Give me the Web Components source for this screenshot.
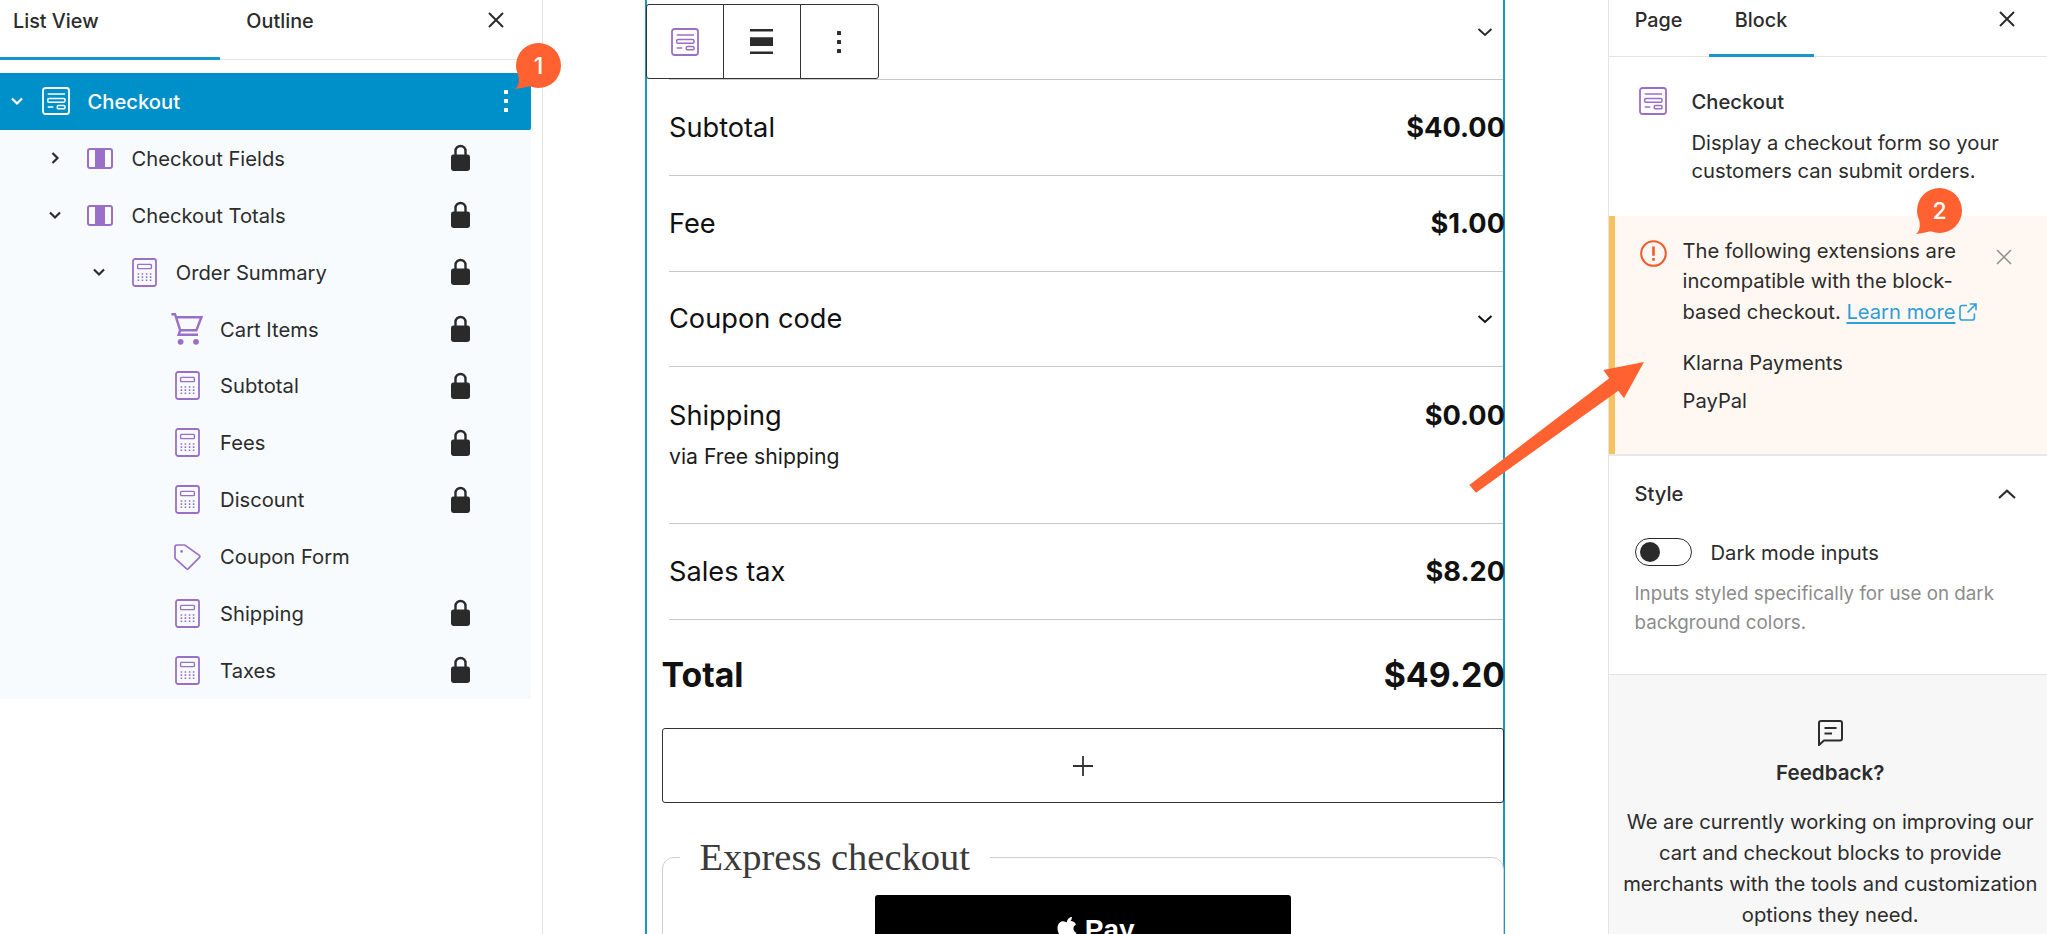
<!DOCTYPE html>
<html lang="en">
<head>
<meta charset="utf-8">
<title>Checkout block</title>
<style>
  html, body { margin: 0; height: 100%; background: #fff; overflow: hidden; }
  body { font-family: Inter, "Liberation Sans", sans-serif; color: #2c2c2c; }
</style>
</head>
<body>
<checkout-editor>
  <list-panel slot="left">
    <list-row level="0" icon="checkout" chevron="down" selected>Checkout</list-row>
    <list-row level="1" icon="columns" chevron="right" locked>Checkout Fields</list-row>
    <list-row level="1" icon="columns" chevron="down" locked>Checkout Totals</list-row>
    <list-row level="2" icon="calc" chevron="down" locked>Order Summary</list-row>
    <list-row level="3" icon="cart" locked>Cart Items</list-row>
    <list-row level="3" icon="calc" locked>Subtotal</list-row>
    <list-row level="3" icon="calc" locked>Fees</list-row>
    <list-row level="3" icon="calc" locked>Discount</list-row>
    <list-row level="3" icon="tag">Coupon Form</list-row>
    <list-row level="3" icon="calc" locked>Shipping</list-row>
    <list-row level="3" icon="calc" locked>Taxes</list-row>
  </list-panel>

  <checkout-canvas slot="center">
    <summary-row>Subtotal<span slot="price">$40.00</span></summary-row>
    <summary-row>Fee<span slot="price">$1.00</span></summary-row>
    <summary-row>Coupon code<block-icon slot="price" name="chevronDownBig" style="margin-right:12px"></block-icon></summary-row>
    <summary-row tall note="via Free shipping">Shipping<span slot="price">$0.00</span></summary-row>
    <summary-row>Sales tax<span slot="price">$8.20</span></summary-row>
    <summary-row total>Total<span slot="price">$49.20</span></summary-row>
  </checkout-canvas>

  <settings-panel slot="right"></settings-panel>

  <note-badge style="left:516px;top:43px">1</note-badge>
  <note-badge style="left:1917px;top:188px">2</note-badge>
  <callout-arrow></callout-arrow>
</checkout-editor>

<script>
  const PURPLE = '#9a6fc8';
  const ICONS = {
    checkout: { w: 28, h: 28, svg: `
      <rect x="1" y="1" width="26" height="26" rx="2.5" fill="none" stroke="currentColor" stroke-width="1.8"/>
      <path d="M5.7 7H23M5.7 20h5.6" stroke="currentColor" stroke-width="1.6" fill="none"/>
      <rect x="5.7" y="11.5" width="17.3" height="3.8" rx="1.2" fill="none" stroke="currentColor" stroke-width="1.5"/>
      <rect x="15.3" y="18.4" width="7.7" height="3.4" rx="1.1" fill="none" stroke="currentColor" stroke-width="1.5"/>` },
    columns: { w: 26, h: 21, svg: `
      <rect x="1" y="1" width="24" height="19" rx="2" fill="none" stroke="currentColor" stroke-width="2"/>
      <rect x="8" y="1" width="10" height="19" fill="currentColor"/>` },
    calc: { w: 25, h: 29, svg: `
      <rect x="1" y="1" width="23" height="27" rx="2.2" fill="none" stroke="currentColor" stroke-width="1.8"/>
      <rect x="5.6" y="6.4" width="13.8" height="4.2" rx=".8" fill="none" stroke="currentColor" stroke-width="1.4"/>
      <path d="M6.4 15.2v7.8M10.4 15.2v7.8M14.6 15.2v7.8M18.6 15.2v7.8" stroke="currentColor" stroke-width="1.6" stroke-dasharray="1.6 1.5" fill="none"/>` },
    cart: { w: 32, h: 32, svg: `
      <path d="M.4 1.2h3.6l5.2 16h16.2L30.4 4.2H5" fill="none" stroke="currentColor" stroke-width="2.4"/>
      <path d="M9.2 17.2 7.6 21.8h19.4" fill="none" stroke="currentColor" stroke-width="2.4"/>
      <circle cx="9.6" cy="28.8" r="2.9" fill="currentColor"/><circle cx="25" cy="28.8" r="2.9" fill="currentColor"/>` },
    tag: { w: 27, h: 26, svg: `
      <path d="M2.8 1h7.4c.6 0 1.1.2 1.5.6l13.600 9.800c.7.6.8 1.400.2 2L14.400 24.600c-.6.6-1.400.5-2 0L1.600 14.800c-.4-.4-.6-.8-.6-1.400V2.800C1 1.800 1.800 1 2.800 1Z" fill="none" stroke="currentColor" stroke-width="1.7"/>
      <circle cx="7.600" cy="7.400" r="1.300" fill="currentColor"/>` },
    lock: { w: 19, h: 27, svg: `
      <path d="M4.500 12V7a5 5 0 0 1 10 0v5" fill="none" stroke="currentColor" stroke-width="2.400"/>
      <rect y="10.500" width="19" height="16.500" rx="2.400" fill="currentColor"/>` },
    dots: { w: 6, h: 22, svg: `<rect y="0" x="1" width="4" height="4" rx=".6" fill="currentColor"/><rect y="9" x="1" width="4" height="4" rx=".6" fill="currentColor"/><rect y="18" x="1" width="4" height="4" rx=".6" fill="currentColor"/>` },
    chevronDown: { w: 14, h: 10, svg: `<path d="M2 2.500 7 7.500l5-5" fill="none" stroke="currentColor" stroke-width="2.200"/>` },
    chevronDownBig: { w: 16, h: 10, svg: `<path d="M1.500 2 8 8l6.500-6" fill="none" stroke="currentColor" stroke-width="2"/>` },
    chevronRight: { w: 10, h: 14, svg: `<path d="M2.500 2 7.500 7l-5 5" fill="none" stroke="currentColor" stroke-width="2.200"/>` },
    chevronUp: { w: 18, h: 10, svg: `<path d="M1 9 9 1.800 17 9" fill="none" stroke="currentColor" stroke-width="2.200"/>` },
    close: { w: 16, h: 16, svg: `<path d="m1 1 14 14M15 1 1 15" fill="none" stroke="currentColor" stroke-width="2"/>` },
    closeThin: { w: 16, h: 16, svg: `<path d="m1 1 14 14M15 1 1 15" fill="none" stroke="currentColor" stroke-width="1.500"/>` },
    alignNone: { w: 23, h: 25, svg: `<path d="M0 0h23v2.400H0zM0 8.300h23V17H0zM0 22.600h23V25H0z" fill="currentColor"/>` },
    alert: { w: 27, h: 27, svg: `
      <circle cx="13.500" cy="13.500" r="12.300" fill="none" stroke="currentColor" stroke-width="2"/>
      <path d="M12.200 6.500h2.600v9.300h-2.600zM12.200 18h2.600v2.700h-2.600z" fill="currentColor"/>` },
    external: { w: 18, h: 18, svg: `
      <path d="M8 2.500H3.200C2 2.500 1 3.500 1 4.700v10C1 16 2 17 3.200 17h10c1.200 0 2.200-1 2.200-2.300V10.500" fill="none" stroke="currentColor" stroke-width="1.600"/>
      <path d="M10.800 1H17v6.200M17 1 8.500 9.500" fill="none" stroke="currentColor" stroke-width="1.600"/>` },
    feedback: { w: 25, h: 26, svg: `
      <path d="M3 1h19c1.100 0 2 .9 2 2v15.500c0 1.100-.9 2-2 2H6L1 25V3c0-1.100.9-2 2-2Z" fill="none" stroke="currentColor" stroke-width="2"/>
      <path d="M6.500 8h12M6.500 13.500h7.500" fill="none" stroke="currentColor" stroke-width="2"/>` },
    plus: { w: 20, h: 20, svg: `<path d="M10 0v20M0 10h20" fill="none" stroke="currentColor" stroke-width="1.800"/>` },
    apple: { w: 20, h: 24, svg: `
      <path d="M14.800 1c.1 1.500-.4 2.900-1.300 4-.9 1-2.200 1.700-3.500 1.600-.2-1.400.4-2.900 1.300-3.900C12.200 1.700 13.600 1 14.800 1ZM19 8.400c-1.900 1.200-2.600 2.600-2.500 4.300.1 2 1.300 3.400 3 4.100-.5 1.400-1.100 2.600-2 3.800-1.100 1.500-2 2.400-3.300 2.400-1.400 0-1.900-.8-3.600-.8-1.700 0-2.300.8-3.600.8-1.300 0-2.200-1-3.400-2.600C1.700 17.900.5 14.900.5 12c0-4.400 2.900-6.800 5.600-6.800 1.500 0 2.700 1 3.700 1s2.300-1.100 4-1.100c1.900 0 3.900 1 5.200 3.300Z" fill="currentColor"/>` }
  };

  class BlockIcon extends HTMLElement {
    connectedCallback() {
      const icon = ICONS[this.getAttribute('name')];
      if (!this.shadowRoot) this.attachShadow({ mode: 'open' });
      this.shadowRoot.innerHTML = `
        <style>
          :host { display: inline-flex; flex: none; line-height: 0; }
        </style>
        <svg width="${icon.w}" height="${icon.h}" viewBox="0 0 ${icon.w} ${icon.h}" aria-hidden="true">${icon.svg}</svg>`;
    }
  }
  customElements.define('block-icon', BlockIcon);

  class CheckoutEditor extends HTMLElement {
    constructor() {
      super();
      this.attachShadow({ mode: 'open' });
      this.shadowRoot.innerHTML = `
        <style>
          :host {
            display: grid;
            grid-template-columns: 543px 1fr 439.500px;
            width: 2047px;
            height: 934px;
            overflow: hidden;
            position: relative;
          }
        </style>
        <slot name="left"></slot>
        <slot name="center"></slot>
        <slot name="right"></slot>
        <slot></slot>`;
    }
  }
  customElements.define('checkout-editor', CheckoutEditor);

  class PanelTab extends HTMLElement {
    constructor() {
      super();
      this.attachShadow({ mode: 'open' });
      this.shadowRoot.innerHTML = `
        <style>
          :host {
            display: flex;
            align-items: center;
            justify-content: center;
            box-sizing: border-box;
            height: 100%;
            font-size: 19.800px;
            font-weight: 500;
            padding-bottom: 16px;
            position: relative;
          }
          :host([active])::after {
            content: '';
            position: absolute;
            left: 0; right: 0; bottom: -1px;
            height: 3px;
            background: #1a96cf;
          }
        </style>
        <slot></slot>`;
    }
  }
  customElements.define('panel-tab', PanelTab);

  class ListPanel extends HTMLElement {
    constructor() {
      super();
      this.attachShadow({ mode: 'open' });
      this.shadowRoot.innerHTML = `
        <style>
          :host {
            display: block;
            height: 934px;
            box-sizing: border-box;
            border-right: 1.500px solid #e4e4e4;
          }
          .tabs {
            display: flex;
            height: 59.500px;
            box-sizing: border-box;
            border-bottom: 1.500px solid #e4e4e4;
            position: relative;
          }
          .close {
            position: absolute;
            left: 488px;
            top: 12px;
          }
          .rows {
            display: block;
            width: 531px;
            margin-top: 13.500px;
            background: #f7fbfe;
          }
        </style>
        <div class="tabs">
          <panel-tab active style="width:220px;justify-content:flex-start;padding-left:13px">List View</panel-tab>
          <panel-tab style="width:120px">Outline</panel-tab>
          <block-icon class="close" name="close"></block-icon>
        </div>
        <div class="rows"><slot></slot></div>`;
    }
  }
  customElements.define('list-panel', ListPanel);

  class ListRow extends HTMLElement {
    connectedCallback() {
      if (this.shadowRoot) return;
      this.attachShadow({ mode: 'open' });
      const level = Number(this.getAttribute('level') || 0);
      const chevron = this.getAttribute('chevron');
      const selected = this.hasAttribute('selected');
      const name = this.getAttribute('icon');
      const start = level === 0 ? 0 : 38 + 44.300 * (level - 1);
      const chevIcon = chevron === 'right' ? 'chevronRight' : 'chevronDown';
      const end = selected ? '<block-icon class="dots" name="dots"></block-icon>'
        : this.hasAttribute('locked') ? '<block-icon class="lock" name="lock"></block-icon>' : '';
      this.shadowRoot.innerHTML = `
        <style>
          :host {
            display: flex;
            align-items: center;
            box-sizing: border-box;
            height: 56.900px;
            padding-left: ${start}px;
            padding-right: 61px;
            font-size: 20.200px;
          }
          :host([selected]) {
            background: #0090c9;
            color: #fff;
            font-weight: 500;
            padding-right: 22px;
            border-bottom-right-radius: 2px;
          }
          .chev { width: 34px; display: flex; justify-content: center; flex: none; margin-right: ${level === 0 ? 8 : 14}px; }
          .icon { width: 28px; display: flex; justify-content: center; flex: none; color: ${selected ? '#fff' : PURPLE}; }
          .icon block-icon { margin-right: ${name === 'cart' ? 4 : level === 3 ? 2 : 0}px; }
          .label { flex: 1; margin-left: 17.500px; }
          .lock { color: #2a2a2a; margin-top: -1px; }
        </style>
        <span class="chev">${chevron ? `<block-icon name="${chevIcon}"></block-icon>` : ''}</span>
        <span class="icon"><block-icon name="${name}"></block-icon></span>
        <span class="label"><slot></slot></span>
        ${end}`;
    }
  }
  customElements.define('list-row', ListRow);

  class BlockToolbar extends HTMLElement {
    constructor() {
      super();
      this.attachShadow({ mode: 'open' });
      this.shadowRoot.innerHTML = `
        <style>
          :host {
            display: flex;
            box-sizing: border-box;
            width: 233px;
            height: 75px;
            background: #fff;
            border: 1.500px solid #333;
            border-radius: 3px;
          }
          span {
            flex: 1;
            display: flex;
            align-items: center;
            justify-content: center;
          }
          span + span { border-left: 1.500px solid #333; }
          .type { color: ${PURPLE}; }
        </style>
        <span class="type"><block-icon name="checkout"></block-icon></span>
        <span><block-icon name="alignNone"></block-icon></span>
        <span><block-icon name="dots"></block-icon></span>`;
    }
  }
  customElements.define('block-toolbar', BlockToolbar);

  class SummaryRow extends HTMLElement {
    connectedCallback() {
      if (this.shadowRoot) return;
      this.attachShadow({ mode: 'open' });
      const note = this.getAttribute('note');
      this.shadowRoot.innerHTML = `
        <style>
          :host {
            display: flex;
            justify-content: space-between;
            align-items: center;
            box-sizing: border-box;
            height: 95.800px;
            margin-left: 22px;
            border-bottom: 1.500px solid #c8c8c8;
            font-size: 27.200px;
            color: #111;
          }
          :host([tall]) {
            height: 156.500px;
            align-items: flex-start;
            padding-top: 32px;
          }
          :host([total]) {
            height: 108.700px;
            margin-left: 14.500px;
            border-bottom: 0;
            font-size: 33.800px;
            font-weight: 700;
          }
          .price { display: flex; align-items: center; font-weight: 700; margin-right: -2px; }
          .note { font-size: 21.200px; margin-top: 11px; color: #1c1c1c; }
        </style>
        <div><slot></slot>${note ? `<div class="note">${note}</div>` : ''}</div>
        <div class="price"><slot name="price"></slot></div>`;
    }
  }
  customElements.define('summary-row', SummaryRow);

  class CheckoutCanvas extends HTMLElement {
    constructor() {
      super();
      this.attachShadow({ mode: 'open' });
      this.shadowRoot.innerHTML = `
        <style>
          :host {
            display: block;
            padding: 0 102.500px 0 102px;
            height: 934px;
            box-sizing: border-box;
          }
          .block {
            box-sizing: border-box;
            height: 100%;
            border-left: 2.500px solid #1a96cf;
            border-right: 2.500px solid #1a96cf;
          }
          .head {
            display: flex;
            justify-content: space-between;
            box-sizing: border-box;
            height: 80px;
            margin-left: 22px;
            border-bottom: 1.500px solid #c8c8c8;
            padding-top: 4px;
          }
          block-toolbar { margin-left: -23.500px; }
          .head block-icon { margin: 23px 10px 0 0; }
          .inner { margin-left: 14.500px; margin-right: -1px; }
          .add {
            display: flex;
            align-items: center;
            justify-content: center;
            box-sizing: border-box;
            height: 75px;
            border: 1.500px solid #333;
            border-radius: 3px;
            color: #333;
          }
          fieldset {
            margin: 31px 0 0;
            padding: 0;
            height: 200px;
            border: 1.500px solid #cfcfcf;
            border-radius: 12px;
            min-width: 0;
          }
          legend {
            margin-left: 17px;
            padding: 0 20px;
            font: 400 38.500px/46px "Liberation Serif", serif;
            color: #3a3a3a;
          }
          .pay {
            display: flex;
            justify-content: center;
            gap: 8px;
            box-sizing: border-box;
            width: 416px;
            height: 80px;
            margin: 15px auto 0;
            padding: 21px 0 0 26px;
            background: #000;
            color: #fff;
            border-radius: 3px;
            font: 700 28px/1 "Liberation Sans", sans-serif;
          }
        </style>
        <div class="block">
          <div class="head">
            <block-toolbar></block-toolbar>
            <block-icon name="chevronDownBig"></block-icon>
          </div>
          <slot></slot>
          <div class="inner">
            <div class="add"><block-icon name="plus"></block-icon></div>
            <fieldset>
              <legend>Express checkout</legend>
              <div class="pay"><block-icon name="apple"></block-icon><span>Pay</span></div>
            </fieldset>
          </div>
        </div>`;
    }
  }
  customElements.define('checkout-canvas', CheckoutCanvas);

  class NoticeBox extends HTMLElement {
    constructor() {
      super();
      this.attachShadow({ mode: 'open' });
      this.shadowRoot.innerHTML = `
        <style>
          :host {
            display: flex;
            box-sizing: border-box;
            height: 238.500px;
            padding: 20px 0 0 25px;
            background: #fff8f2;
            border-left: 6.500px solid #f5c25f;
            box-shadow: 0 2px 0 #e8e8e8;
            font-size: 20.200px;
            line-height: 30.700px;
            position: relative;
          }
          .alert { color: #f2592c; margin: 4px 16px 0 0; height: 27px; }
          .text { width: 302px; }
          p { margin: 0; }
          p + p { margin-top: 7px; }
          .list { margin-top: 20px; }
          a { color: #2f9ed6; text-decoration: underline; text-underline-offset: 3px; }
          .ext { color: #2f9ed6; margin-left: 4px; vertical-align: -2px; display: inline-block; }
          .close { position: absolute; left: 381px; top: 33px; color: #8f8f8f; }
        </style>
        <block-icon class="alert" name="alert"></block-icon>
        <div class="text">
          <p>The following extensions are incompatible with the block-based checkout. <a href="#">Learn more</a><block-icon class="ext" name="external"></block-icon></p>
          <div class="list"><p>Klarna Payments</p><p>PayPal</p></div>
        </div>
        <block-icon class="close" name="closeThin"></block-icon>`;
    }
  }
  customElements.define('notice-box', NoticeBox);

  class SettingsPanel extends HTMLElement {
    constructor() {
      super();
      this.attachShadow({ mode: 'open' });
      this.shadowRoot.innerHTML = `
        <style>
          :host {
            display: block;
            height: 934px;
            box-sizing: border-box;
            border-left: 1.500px solid #e4e4e4;
            font-size: 20.200px;
          }
          .tabs {
            display: flex;
            height: 57px;
            box-sizing: border-box;
            border-bottom: 1.500px solid #e4e4e4;
            position: relative;
          }
          .tabs .close { position: absolute; left: 390px; top: 11px; }
          .card {
            display: flex;
            gap: 25px;
            box-sizing: border-box;
            height: 158.700px;
            padding: 30px 0 0 30px;
          }
          .card .ic { color: ${PURPLE}; height: 28px; }
          .card .txt { margin-top: 1px; }
          .card b { display: block; font-weight: 500; line-height: 28px; margin-bottom: 12.500px; }
          .card p { margin: 0; line-height: 28.300px; width: 330px; }
          .style {
            box-sizing: border-box;
            height: 219px;
            padding: 23px 26px 0;
            border-bottom: 1.500px solid #e4e4e4;
            margin-top: 2px;
          }
          .style-head {
            display: flex;
            justify-content: space-between;
            align-items: center;
            font-weight: 500;
            line-height: 30px;
            padding-right: 5px;
          }
          .toggle-row { display: flex; align-items: center; gap: 19px; margin-top: 29px; }
          .toggle {
            display: flex;
            align-items: center;
            box-sizing: border-box;
            width: 57px;
            height: 28px;
            padding-left: 4px;
            border: 1.500px solid #2a2a2a;
            border-radius: 14px;
          }
          .toggle i { width: 20px; height: 20px; border-radius: 50%; background: #2a2a2a; }
          .help { margin: 14px 0 0; font-size: 18.800px; line-height: 28.600px; color: #8c8c8c; width: 385px; }
          .feedback {
            box-sizing: border-box;
            height: 260px;
            padding: 45px 0 0 5px;
            background: #f7f7f7;
            text-align: center;
          }
          .feedback b { display: block; margin-top: 8px; font-size: 20.600px; font-weight: 600; line-height: 28px; }
          .feedback p { margin: 20px auto 0; width: 424px; line-height: 30.900px; }
        </style>
        <div class="tabs">
          <panel-tab style="width:100px">Page</panel-tab>
          <panel-tab active style="width:105px">Block</panel-tab>
          <block-icon class="close" name="close"></block-icon>
        </div>
        <div class="card">
          <block-icon class="ic" name="checkout"></block-icon>
          <div class="txt"><b>Checkout</b><p>Display a checkout form so your customers can submit orders.</p></div>
        </div>
        <notice-box></notice-box>
        <div class="style">
          <div class="style-head"><span>Style</span><block-icon name="chevronUp"></block-icon></div>
          <div class="toggle-row"><span class="toggle"><i></i></span><span>Dark mode inputs</span></div>
          <p class="help">Inputs styled specifically for use on dark background colors.</p>
        </div>
        <div class="feedback">
          <block-icon name="feedback"></block-icon>
          <b>Feedback?</b>
          <p>We are currently working on improving our cart and checkout blocks to provide merchants with the tools and customization options they need.</p>
        </div>`;
    }
  }
  customElements.define('settings-panel', SettingsPanel);

  class NoteBadge extends HTMLElement {
    constructor() {
      super();
      this.attachShadow({ mode: 'open' });
      this.shadowRoot.innerHTML = `
        <style>
          :host {
            position: absolute;
            width: 45px;
            height: 45px;
            display: flex;
            align-items: center;
            justify-content: center;
            color: #fff;
            font-size: 23px;
            font-weight: 500;
          }
          svg { position: absolute; left: 0; top: 0; overflow: visible; }
          span { position: relative; }
        </style>
        <svg width="45" height="45" viewBox="0 0 45 45" aria-hidden="true">
          <circle cx="22.500" cy="22.500" r="22.500" fill="#ff6130"/>
          <path d="M-1.500 46C3 44 3.500 38 2 30L15 43C10 43.500 4 46-1.500 46Z" fill="#ff6130"/>
        </svg>
        <span><slot></slot></span>`;
    }
  }
  customElements.define('note-badge', NoteBadge);

  class CalloutArrow extends HTMLElement {
    constructor() {
      super();
      this.attachShadow({ mode: 'open' });
      this.shadowRoot.innerHTML = `
        <style>
          :host { position: absolute; left: 0; top: 0; pointer-events: none; }
          svg { display: block; }
        </style>
        <svg width="2047" height="934" viewBox="0 0 2047 934" aria-hidden="true">
          <path d="M1469.300 485 1609.300 378.300 1603.300 370 1644 362 1624 398.300 1618.300 390.700 1476 492.700Z" fill="#ff6130"/>
        </svg>`;
    }
  }
  customElements.define('callout-arrow', CalloutArrow);
</script>
</body>
</html>
